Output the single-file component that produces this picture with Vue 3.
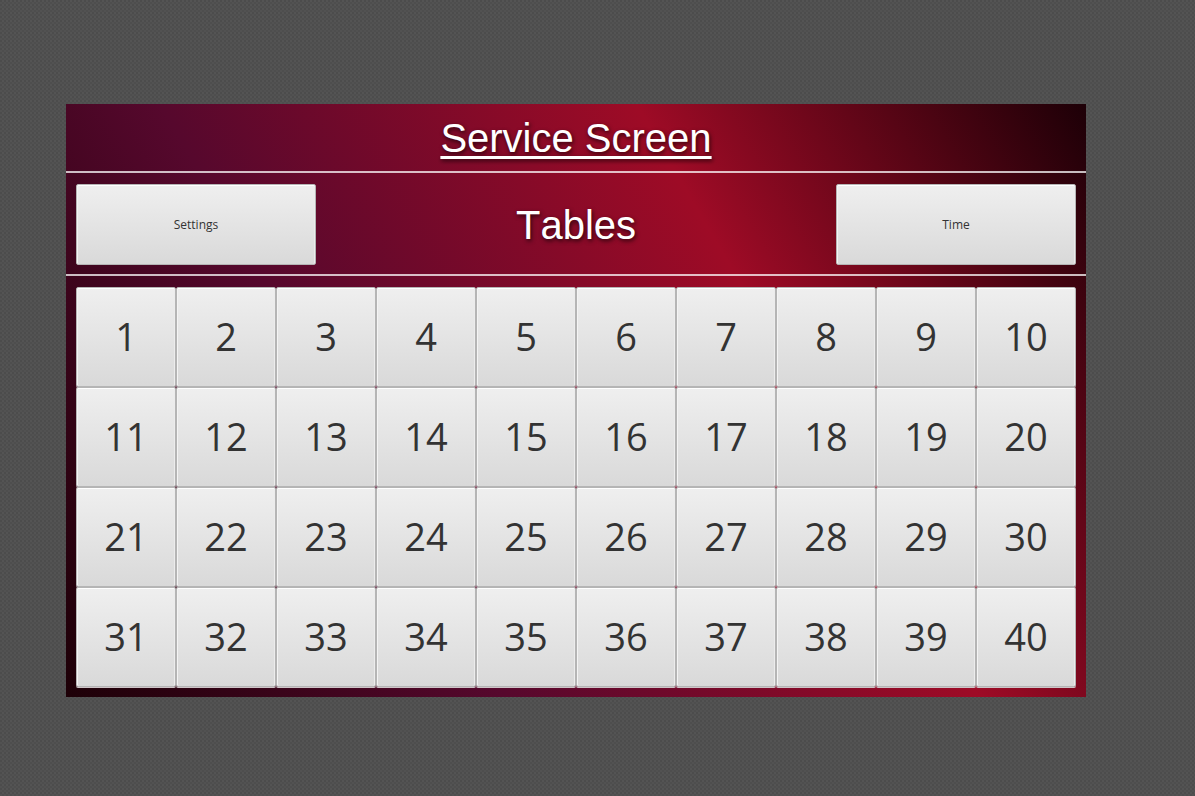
<script setup>
const tables = Array.from({ length: 40 }, (_, i) => i + 1)
</script>

<template>
  <div class="page">
    <main class="panel">
      <header class="header">
        <h1 class="title underlined">Service Screen</h1>
      </header>
      <section class="toolbar">
        <button type="button" class="btn wide">Settings</button>
        <h2 class="title">Tables</h2>
        <button type="button" class="btn wide">Time</button>
      </section>
      <section class="tables">
        <button v-for="n in tables" :key="n" type="button" class="btn cell">{{ n }}</button>
      </section>
    </main>
  </div>
</template>

<style>
body {
  background-color: #505050;
  background-image:
    conic-gradient(#545454 25%, #4e4e4e 0 50%, #525252 0 75%, #4c4c4c 0);
  background-size: 4px 4px;
}
</style>

<style scoped>
.page {
  box-sizing: border-box;
  min-height: 100vh;
  padding: 104px 109px 99px 66px;
}
.panel {
  background: linear-gradient(60deg, #1d0007 0%, #56082d 32%, #9e0b26 67%, #1d0007 100%);
}
.header {
  display: flex;
  align-items: center;
  justify-content: center;
  height: 67px;
  border-bottom: 2px solid rgba(255, 255, 255, 0.74);
}
.title {
  margin: 0;
  font: 400 40px/46px "Liberation Sans", Arial, sans-serif;
  font-kerning: none;
  color: #fff;
  text-shadow: 1px 2px 4px rgba(0, 0, 0, 0.7);
}
.underlined {
  text-decoration: underline;
  text-decoration-thickness: 3px;
  text-underline-offset: 4px;
  text-decoration-skip-ink: none;
}
.toolbar {
  display: grid;
  grid-template-columns: 240px 1fr 240px;
  align-items: center;
  justify-items: center;
  padding: 11px 10px 9px;
  border-bottom: 2px solid rgba(255, 255, 255, 0.74);
}
.tables {
  display: grid;
  grid-template-columns: repeat(10, 1fr);
  padding: 11px 10px 10px;
}
.btn {
  box-sizing: border-box;
  margin: 0;
  padding: 0;
  border: 1px solid #b5b5b5;
  border-radius: 2px;
  background: linear-gradient(#efefef, #d9d9d9);
  box-shadow: inset 0 1px 0 #fff, inset 1px 0 0 #f4f4f4, inset -1px 0 0 #ececec;
  color: #333;
  font-family: "Open Sans", "Noto Sans", sans-serif;
}
.wide {
  width: 100%;
  height: 81px;
  font-size: 12px;
}
.cell {
  height: 100px;
  padding-bottom: 2px;
  font-size: 38px;
  box-shadow: inset 0 1px 0 #fff, inset 1px 0 0 #f4f4f4, inset -1px 0 0 #ececec, 0 1px 0 #cfc5c8;
}
</style>
